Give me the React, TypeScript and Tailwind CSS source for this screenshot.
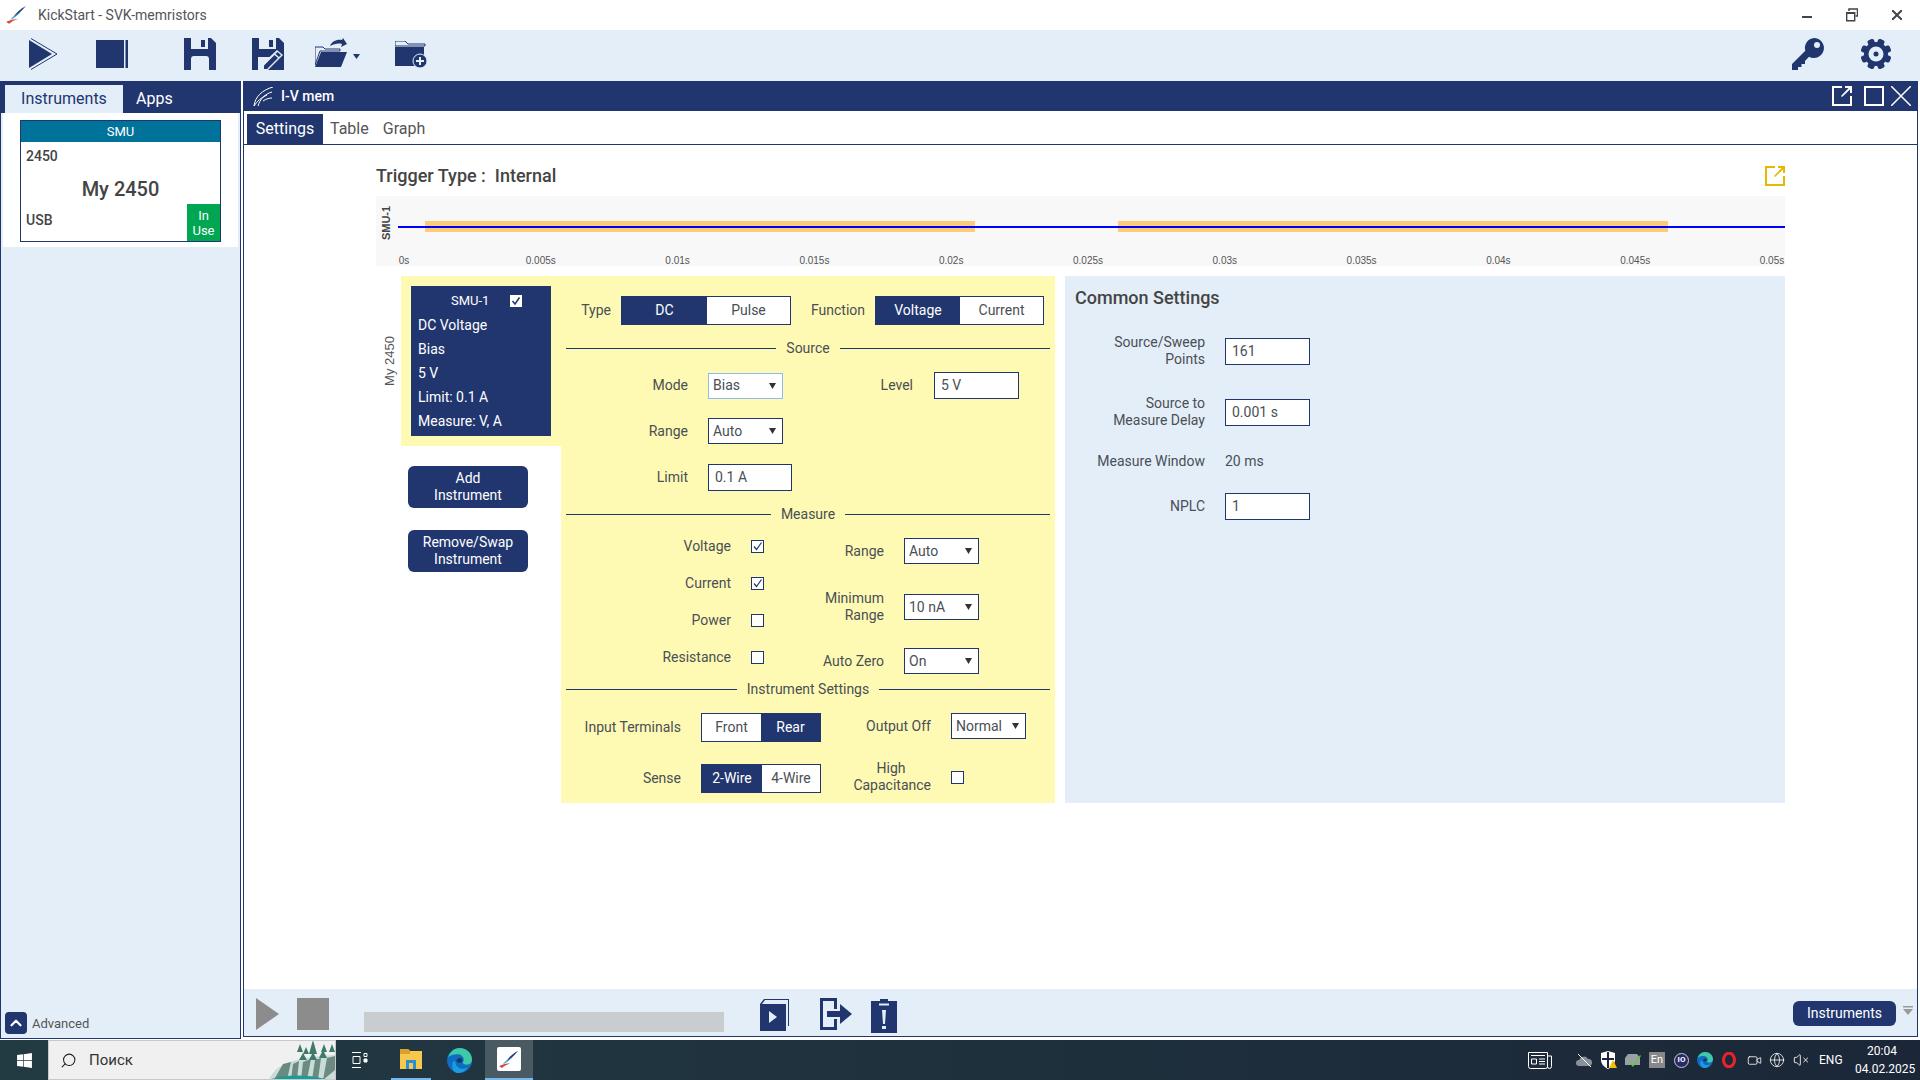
import { Globe, Video, VolumeX, Search, ChevronUp } from "lucide-react"
import { FaWindows } from "react-icons/fa"

const navy = "#21366f"

const ticks = ["0s", "0.005s", "0.01s", "0.015s", "0.02s", "0.025s", "0.03s", "0.035s", "0.04s", "0.045s", "0.05s"]

function Caret() {
    return (
        <svg width="7" height="6" viewBox="0 0 7 6" className="shrink-0">
            <path d="M0 0h7L3.5 6z" fill="#333" />
        </svg>
    )
}

function Select({ value, focus, width = "w-[75px]" }: { value: string; focus?: boolean; width?: string }) {
    return (
        <div className={`${width} h-[26px] shrink-0 flex items-center justify-between pl-[4px] pr-[6px] bg-white border text-[14px] text-[#4a4f55] ${focus ? "border-[#8fbcf0]" : "border-[#21366f]"}`}>
            <span>{value}</span>
            <Caret />
        </div>
    )
}

function Input({ value, width = "w-[85px]" }: { value: string; width?: string }) {
    return (
        <div className={`${width} h-[27px] shrink-0 flex items-center pl-[6px] bg-white border border-[#21366f] text-[14px] text-[#4a4f55]`}>
            {value}
        </div>
    )
}

function Toggle({ left, right, active, leftW, rightW }: { left: string; right: string; active: "left" | "right"; leftW: string; rightW: string }) {
    const on = "bg-[#21366f] text-white"
    const off = "bg-white text-[#4a4f55]"
    return (
        <div className="flex h-[29px] shrink-0 border border-[#21366f] text-[14px]">
            <div className={`${leftW} flex items-center justify-center ${active === "left" ? on : off}`}>{left}</div>
            <div className={`${rightW} flex items-center justify-center ${active === "right" ? on : off}`}>{right}</div>
        </div>
    )
}

function Divider({ label, className }: { label: string; className: string }) {
    return (
        <div className={`flex items-center h-[20px] ml-[5px] mr-[5px] gap-[10px] text-[14px] text-[#4a4f55] ${className}`}>
            <div className="flex-1 h-px bg-[#21366f]" />
            <span>{label}</span>
            <div className="flex-1 h-px bg-[#21366f]" />
        </div>
    )
}

function Check({ checked, className = "" }: { checked?: boolean; className?: string }) {
    return (
        <div className={`w-[13px] h-[13px] shrink-0 bg-white border border-[#21366f] flex items-center justify-center ${className}`}>
            {checked && (
                <svg width="11" height="11" viewBox="0 0 11 11">
                    <path d="M2 5.5l2.5 3L9.5 1.5" fill="none" stroke="#21366f" strokeWidth="1.2" />
                </svg>
            )}
        </div>
    )
}

function MeasureCheck({ label, checked }: { label: string; checked?: boolean }) {
    return (
        <div className="h-[37px] flex items-center">
            <div className="w-[170px] text-right">{label}</div>
            <Check checked={checked} className="ml-[20px]" />
        </div>
    )
}

function Popout({ color }: { color: string }) {
    return (
        <svg width="20" height="20" viewBox="0 0 20 20" className="shrink-0">
            <path d="M10 1H1v18h18v-9" fill="none" stroke={color} strokeWidth="2" />
            <path d="M13 0h7v7h-2V3.400L10 11 9 10l7.600-8H13z" fill={color} />
        </svg>
    )
}

function Gear() {
    return (
        <svg width="32" height="32" viewBox="0 0 32 32">
            {[0, 45, 90, 135, 180, 225, 270, 315].map((a) => (
                <rect key={a} x="12.500" y="0.500" width="7" height="8" rx="2" fill={navy} transform={`rotate(${a + 22.5} 16 16)`} />
            ))}
            <circle cx="16" cy="16" r="12" fill={navy} />
            <circle cx="16" cy="16" r="7.500" fill="#e4eef8" />
            <circle cx="16" cy="16" r="2.500" fill={navy} />
        </svg>
    )
}

function Floppy({ pencil }: { pencil?: boolean }) {
    return (
        <svg width="32" height="32" viewBox="0 0 32 32">
            <path d="M0 0h27l5 5v27H0z" fill={navy} />
            <path d="M7 0h17v11H7z" fill="#e4eef8" />
            <path d="M17 2h4v7h-4z" fill={navy} />
            {!pencil && <path d="M7 21q0-3 3-3h12q3 0 3 3v11H7z" fill="#e4eef8" />}
            {pencil && (
                <>
                    <path d="M6 19h14l-8 9v4H6z" fill="#e4eef8" />
                    <path d="M25 12l6 5-15 15h-6v-6z" fill="#e4eef8" />
                    <path d="M25.500 14l3.500 3-2 2-3.500-3zM22.500 17l3.500 3-11 11H12v-3.500z" fill={navy} />
                </>
            )}
        </svg>
    )
}

function TitleLogo({ size = 21 }: { size?: number }) {
    return (
        <svg width={size} height={size * 0.85} viewBox="0 0 21 18">
            <path d="M20 0C14 3 9 8 6 13c4-3 9-7 14-13z" fill="#21366f" />
            <path d="M15 6C10 9 6 11 4 14c3-1 7-4 11-8z" fill="#3fa6d8" />
            <path d="M0 16c4-2 8-3 12-3-4 1-7 3-9 5z" fill="#d6453f" />
        </svg>
    )
}

function Edge({ size }: { size: number }) {
    return (
        <svg width={size} height={size} viewBox="0 0 24 24">
            <circle cx="12" cy="12" r="12" fill="#0f6cc0" />
            <path d="M1 9C3 3 8 0 12 0c7 0 12 5 12 11 0 3-2 5-5 5-2 0-4-1-4-2 1-1 1-2 1-3 0-3-3-5-6-5C6 6 3 7 1 9z" fill="#3ec9a7" />
            <path d="M8 13c0 4 3 7 7 7 2 0 4-1 5-2-2 4-5 6-9 6-4 0-6-3-6-7 0-3 1-5 3-4z" fill="#1b9de2" />
            <path d="M9 12c1-2 3-3 5-2 1 1 1 3 0 4-1 0-4 1-5-2z" fill="#16395f" />
        </svg>
    )
}

function TitleBar() {
    return (
        <div className="h-[30px] shrink-0 flex items-center bg-white text-[14px] text-[#555]">
            <div className="ml-[6px] w-[32px]"><TitleLogo /></div>
            <span>KickStart - SVK-memristors</span>
            <div className="ml-auto flex items-center">
                <div className="w-[10px] h-[2px] bg-[#444] mt-[4px]" />
                <svg width="12" height="14" viewBox="0 0 12 14" className="ml-[34px]" fill="none" stroke="#444">
                    <path d="M3 3V1h8.500v7H9.500" strokeWidth="1.500" />
                    <path d="M.700 4.700h8v8h-8z" strokeWidth="1.400" />
                    <path d="M0 4h9v2H0z" fill="#444" stroke="none" />
                </svg>
                <svg width="10" height="10" viewBox="0 0 10 10" className="ml-[34px] mr-[18px]" stroke="#444" strokeWidth="2">
                    <path d="M0 0l10 10M10 0L0 10" />
                </svg>
            </div>
        </div>
    )
}

function Toolbar() {
    return (
        <div className="h-[51px] shrink-0 flex items-start pt-[8px] bg-[#e4eef8]">
            <svg width="29" height="32" viewBox="0 0 29 32" className="ml-[29px]">
                <path d="M0 2l23 14L0 30z" fill={navy} />
                <path d="M2 .5L28 16 2 31.500" fill="none" stroke={navy} strokeWidth="1" />
            </svg>
            <svg width="32" height="32" viewBox="0 0 32 32" className="ml-[38px]">
                <path d="M0 2h28v28H0zM29.500 2H32v28h-2.500z" fill={navy} />
            </svg>
            <div className="ml-[56px]"><Floppy /></div>
            <div className="ml-[36px]"><Floppy pencil /></div>
            <svg width="32" height="30" viewBox="0 0 32 30" className="ml-[31px]">
                <path d="M0 9V27L5 13h20v-2H10L8 9z" fill="none" stroke={navy} strokeWidth="1" />
                <path d="M6 14h26l-6 15H0z" fill={navy} />
                <path d="M15 8c2-5 7-7 12-6l1-2 4 6-6 3 1-3c-4-1-8 0-12 2z" fill={navy} />
            </svg>
            <svg width="7" height="5" viewBox="0 0 7 5" className="ml-[6px] mt-[16px]">
                <path d="M0 0h7L3.500 5z" fill={navy} />
            </svg>
            <svg width="32" height="27" viewBox="0 0 32 27" className="ml-[35px] mt-[3px]">
                <path d="M0 3V0h10l3 3h17v2H0z" fill="none" stroke={navy} strokeWidth="1" />
                <path d="M0 6h29v19H0z" fill={navy} />
                <circle cx="25" cy="20" r="7" fill={navy} stroke="#e4eef8" strokeWidth="1" />
                <path d="M24 16h2v3h3v2h-3v3h-2v-3h-3v-2h3z" fill="#e4eef8" />
            </svg>
            <svg width="32" height="32" viewBox="0 0 32 32" className="ml-auto">
                <path d="M22 0a10 10 0 1 1-5 18.700L13 23v3H9.500v3H6v3H0v-6l13.300-13.300A10 10 0 0 1 22 0z" fill={navy} />
                <circle cx="25" cy="7" r="3" fill="#e4eef8" />
            </svg>
            <div className="ml-[36px] mr-[28px]"><Gear /></div>
        </div>
    )
}

function LeftPanel() {
    return (
        <div className="w-[241px] h-[958px] shrink-0 flex flex-col bg-[#e4eef8] border-x border-b border-[#21366f]">
            <div className="h-[32px] shrink-0 flex items-end bg-[#21366f] pl-[4px] text-[16px]">
                <div className="w-[118px] h-[28px] flex items-center justify-center bg-[#e4eef8] text-[#21366f]">Instruments</div>
                <div className="ml-[13px] h-[28px] flex items-center text-white">Apps</div>
            </div>
            <div className="mx-[2px] h-[134px] shrink-0 bg-white pt-[7px] pl-[17px]">
                <div className="w-[201px] h-[122px] flex flex-col border border-[#21366f]">
                    <div className="h-[21px] shrink-0 flex items-center justify-center bg-[#00739b] text-white text-[13px]">SMU</div>
                    <div className="flex-1 relative text-[#444] font-medium">
                        <div className="pl-[5px] pt-[4px] text-[14px]">2450</div>
                        <div className="text-center text-[20px] mt-[7px]">My 2450</div>
                        <div className="pl-[5px] mt-[6px] text-[14px]">USB</div>
                        <div className="absolute right-0 bottom-0 w-[33px] h-[37px] flex items-center justify-center text-center bg-[#00a651] text-white text-[13px] font-normal leading-[15px]">In Use</div>
                    </div>
                </div>
            </div>
            <div className="flex-1" />
            <div className="h-[26px] flex items-start pl-[4px] pt-[0px] mb-[3px]">
                <div className="w-[22px] h-[22px] mt-[3px] rounded-[4px] bg-[#21366f] flex items-center justify-center">
                    <ChevronUp size={18} color="white" strokeWidth={3} />
                </div>
                <span className="ml-[5px] mt-[7px] text-[13px] leading-[15px] text-[#555]">Advanced</span>
            </div>
        </div>
    )
}

function Chart() {
    return (
        <div className="h-[70px] bg-[#f8f8f8]">
            <svg width="1409" height="70" viewBox="0 0 1409 70">
                <rect x="49" y="25" width="550" height="11" fill="#fdcb7c" />
                <rect x="742" y="25" width="550" height="11" fill="#fdcb7c" />
                <rect x="22" y="30" width="1387" height="2" fill="#0000ff" />
                <text x="0" y="0" transform="translate(14 27) rotate(-90)" textAnchor="middle" fontFamily="Liberation Sans, sans-serif" fontSize="11" fontWeight="700" fill="#444">SMU-1</text>
                {ticks.map((t, i) => (
                    <text key={t} x={28 + i * 136.8} y="68" textAnchor="middle" fontFamily="Liberation Sans, sans-serif" fontSize="10" fill="#555">{t}</text>
                ))}
            </svg>
        </div>
    )
}

function SmuColumn() {
    return (
        <div className="w-[160px] shrink-0">
            <div className="h-[170px] bg-[#fefab4] pl-[10px] pt-[10px]">
                <div className="w-[140px] h-[150px] bg-[#21366f] text-white text-[14px] pt-[3px] pl-[7px]">
                    <div className="h-[24px] flex items-center">
                        <span className="ml-[33px] text-[13px]">SMU-1</span>
                        <div className="ml-[21px] w-[12px] h-[12px] bg-white flex items-center justify-center">
                            <svg width="10" height="10" viewBox="0 0 10 10">
                                <path d="M1.500 5l2.500 3 4.500-6.500" fill="none" stroke="#21366f" strokeWidth="1.500" />
                            </svg>
                        </div>
                    </div>
                    <div className="h-[24px] flex items-center">DC Voltage</div>
                    <div className="h-[24px] flex items-center">Bias</div>
                    <div className="h-[24px] flex items-center">5 V</div>
                    <div className="h-[24px] flex items-center">Limit: 0.1 A</div>
                    <div className="h-[24px] flex items-center">Measure: V, A</div>
                </div>
            </div>
            <div className="ml-[7px] mt-[20px] w-[120px] h-[42px] flex items-center justify-center text-center rounded-[6px] bg-[#21366f] text-white text-[14px] leading-[17px]">Add<br />Instrument</div>
            <div className="ml-[7px] mt-[22px] w-[120px] h-[42px] flex items-center justify-center text-center rounded-[6px] bg-[#21366f] text-white text-[14px] leading-[17px]">Remove/Swap<br />Instrument</div>
        </div>
    )
}

function SourceForm() {
    return (
        <div className="w-[494px] h-[527px] shrink-0 bg-[#fefab4] pt-[20px] text-[14px] text-[#4a4f55]">
            <div className="flex items-center">
                <div className="w-[50px] text-right">Type</div>
                <div className="ml-[10px]"><Toggle left="DC" right="Pulse" active="left" leftW="w-[85px]" rightW="w-[83px]" /></div>
                <div className="ml-[20px] w-[54px]">Function</div>
                <div className="ml-[10px]"><Toggle left="Voltage" right="Current" active="left" leftW="w-[84px]" rightW="w-[83px]" /></div>
            </div>
            <Divider label="Source" className="mt-[13px]" />
            <div className="mt-[14px] flex items-center">
                <div className="w-[127px] text-right">Mode</div>
                <div className="ml-[20px]"><Select value="Bias" focus /></div>
                <div className="w-[130px] text-right">Level</div>
                <div className="ml-[21px]"><Input value="5 V" /></div>
            </div>
            <div className="mt-[19px] flex items-center">
                <div className="w-[127px] text-right">Range</div>
                <div className="ml-[20px]"><Select value="Auto" /></div>
            </div>
            <div className="mt-[20px] flex items-center">
                <div className="w-[127px] text-right">Limit</div>
                <div className="ml-[20px]"><Input value="0.1 A" width="w-[84px]" /></div>
            </div>
            <Divider label="Measure" className="mt-[13px]" />
            <div className="mt-[4px] flex h-[148px]">
                <div className="w-[203px] shrink-0">
                    <MeasureCheck label="Voltage" checked />
                    <MeasureCheck label="Current" checked />
                    <MeasureCheck label="Power" />
                    <MeasureCheck label="Resistance" />
                </div>
                <div className="pt-[10px]">
                    <div className="flex items-center">
                        <div className="w-[120px] text-right">Range</div>
                        <div className="ml-[20px]"><Select value="Auto" /></div>
                    </div>
                    <div className="mt-[26px] flex items-center">
                        <div className="w-[120px] text-right leading-[17px]">Minimum<br />Range</div>
                        <div className="ml-[20px]"><Select value="10 nA" /></div>
                    </div>
                    <div className="mt-[24px] flex items-center">
                        <div className="w-[120px] text-right">Auto Zero</div>
                        <div className="ml-[20px]"><Select value="On" /></div>
                    </div>
                </div>
            </div>
            <Divider label="Instrument Settings" className="mt-[3px]" />
            <div className="mt-[14px] flex items-start">
                <div className="w-[120px] h-[29px] flex items-center justify-end">Input Terminals</div>
                <div className="ml-[20px]"><Toggle left="Front" right="Rear" active="right" leftW="w-[59px]" rightW="w-[59px]" /></div>
                <div className="w-[110px] h-[26px] flex items-center justify-end">Output Off</div>
                <div className="ml-[20px]"><Select value="Normal" /></div>
            </div>
            <div className="mt-[21px] flex items-center">
                <div className="w-[120px] text-right">Sense</div>
                <div className="ml-[20px]"><Toggle left="2-Wire" right="4-Wire" active="left" leftW="w-[60px]" rightW="w-[58px]" /></div>
                <div className="w-[110px] text-right leading-[17px] -mt-[3px]">
                    <div className="text-center w-[80px] ml-[30px]">High</div>
                    Capacitance
                </div>
                <Check className="ml-[20px] -mt-[3px]" />
            </div>
        </div>
    )
}

function CommonRow({ label, value, input, className }: { label: React.ReactNode; value: string; input?: boolean; className: string }) {
    return (
        <div className={`flex items-center ${className}`}>
            <div className="w-[130px] text-right leading-[17px]">{label}</div>
            <div className="ml-[20px]">{input ? <Input value={value} /> : value}</div>
        </div>
    )
}

function CommonSettings() {
    return (
        <div className="w-[720px] h-[527px] ml-[10px] shrink-0 bg-[#e4eef8] pt-[10px] pl-[10px] text-[14px] text-[#4a4f55]">
            <div className="h-[22px] flex items-center text-[18px] font-medium text-[#444]">Common Settings</div>
            <CommonRow className="mt-[26px]" label={<>Source/Sweep<br />Points</>} value="161" input />
            <CommonRow className="mt-[27px]" label={<>Source to<br />Measure Delay</>} value="0.001 s" input />
            <CommonRow className="mt-[22px]" label="Measure Window" value="20 ms" />
            <CommonRow className="mt-[21px]" label="NPLC" value="1" input />
        </div>
    )
}

function BottomBar() {
    return (
        <div className="h-[47px] shrink-0 flex items-start bg-[#e4eef8] pl-[12px] pr-[4px]">
            <svg width="23" height="32" viewBox="0 0 23 32" className="mt-[9px]">
                <path d="M0 0l23 16L0 32z" fill="#8c8c8c" />
            </svg>
            <div className="ml-[18px] mt-[9px] w-[32px] h-[32px] bg-[#8c8c8c]" />
            <div className="ml-[35px] mt-[23px] w-[360px] h-[20px] bg-[#c9cdd0]" />
            <svg width="30" height="32" viewBox="0 0 30 32" className="ml-[36px] mt-[10px]">
                <path d="M0 5l4-5h25v27h-1V1H5L2 5h24v27H0z" fill={navy} />
                <path d="M9 12l8 6-8 6z" fill="#e4eef8" />
            </svg>
            <svg width="32" height="32" viewBox="0 0 32 32" className="ml-[30px] mt-[9px]">
                <path d="M0 0h17v11h-3V3H3v26h11v-8h3v11H0z" fill={navy} />
                <path d="M7 13h13V6l12 10-12 10v-7H7z" fill={navy} />
            </svg>
            <svg width="26" height="34" viewBox="0 0 26 34" className="ml-[19px] mt-[10px]">
                <path d="M0 2h9V0h8v2h9v32H0z" fill={navy} />
                <path d="M8 4.500h10v2H8zM11 11h4l-1 14h-2zM11 27h4v3h-4z" fill="#e4eef8" />
            </svg>
            <div className="ml-auto mt-[12px] w-[103px] h-[25px] flex items-center justify-center rounded-[6px] bg-[#21366f] text-white text-[14px]">Instruments</div>
            <svg width="10" height="9" viewBox="0 0 10 9" className="ml-[7px] mt-[17px]">
                <path d="M0 0h10v1.500H0zM0 3h10L5 9z" fill="#999" />
            </svg>
        </div>
    )
}

function MainPanel() {
    return (
        <div className="ml-[2px] w-[1675px] h-[956px] shrink-0 flex flex-col border-x border-b border-[#21366f]">
            <div className="h-[30px] shrink-0 flex items-center bg-[#21366f] text-white text-[14px] font-medium">
                <svg width="20" height="19" viewBox="0 0 20 19" className="ml-[9px]" fill="none" stroke="white" strokeWidth="1">
                    <path d="M1 19C2 10 9 3 20 0M5 19C7 12 12 7 19 5M10 14c3-2 6-3 9-3M1 19c3-5 8-9 13-11" />
                </svg>
                <span className="ml-[8px]">I-V mem</span>
                <div className="ml-auto flex items-center">
                    <Popout color="white" />
                    <div className="ml-[12px] w-[20px] h-[20px] border-2 border-white" />
                    <svg width="20" height="20" viewBox="0 0 20 20" className="ml-[7px] mr-[6px]" stroke="white" strokeWidth="1.500">
                        <path d="M0 0l20 20M20 0L0 20" />
                    </svg>
                </div>
            </div>
            <div className="h-[34px] shrink-0 flex items-end border-b border-[#21366f] pl-[3px] text-[16px] text-[#555]">
                <div className="w-[76px] h-[30px] flex items-center justify-center bg-[#21366f] text-white">Settings</div>
                <div className="ml-[7px] h-[30px] flex items-center">Table</div>
                <div className="ml-[14px] h-[30px] flex items-center">Graph</div>
            </div>
            <div className="flex-1 pl-[132px]">
                <div className="w-[1409px]">
                    <div className="h-[51px] pt-[10px] flex items-center justify-between text-[18px] font-medium text-[#444]">
                        <span className="whitespace-pre">Trigger Type :  Internal</span>
                        <Popout color="#e6b800" />
                    </div>
                    <Chart />
                    <div className="mt-[10px] flex">
                        <div className="w-[25px] shrink-0 h-[170px] flex items-center justify-end pr-[2px]">
                            <span className="[writing-mode:vertical-rl] rotate-180 text-[13px] text-[#555] font-[family-name:Liberation_Sans,sans-serif]">My 2450</span>
                        </div>
                        <SmuColumn />
                        <SourceForm />
                        <CommonSettings />
                    </div>
                </div>
            </div>
            <BottomBar />
        </div>
    )
}

function Taskbar() {
    return (
        <div className="h-[40px] shrink-0 flex items-center bg-gradient-to-r from-[#223a42] to-[#1b2738] text-white">
            <FaWindows size={17} color="white" className="ml-[16px]" />
            <div className="ml-[15px] w-[288px] h-[40px] flex items-center bg-[#f0f0f0] border border-[#c8c8c8] overflow-hidden">
                <Search size={17} color="#222" className="ml-[11px] -scale-x-100" strokeWidth={1.500} />
                <span className="ml-[12px] text-[15px] text-[#333]">Поиск</span>
                <svg width="66" height="40" viewBox="0 0 66 40" className="ml-auto">
                    <path d="M0 40C6 26 18 18 66 15v25z" fill="#c8dcd8" />
                    <path d="M6 38l8-14 8-2-4 18zM24 24l6-3-2 19h-6zM34 22l8-3-4 21h-6zM46 20l6-2-3 22h-6zM58 18l8-2v14l-12 10z" fill="#6c8a80" />
                    <path d="M0 40c14-6 40-6 60 0z" fill="#1a9c98" />
                    <path d="M28 12l3-8 3 8zM40 14l4-14 4 14zM52 12l3-8 3 8zM60 12l3-8 3 8zM34 14l3-7 3 7zM30 20l4-7 4 7zM40 20l4-8 4 8zM50 18l4-8 4 8z" fill="#3d7a6c" />
                </svg>
            </div>
            <svg width="16" height="16" viewBox="0 0 16 16" className="ml-[16px]" fill="none" stroke="white" strokeWidth="1">
                <path d="M0 .5h9M0 15.500h9M1 4.500h7v7H1zM12 1.500h3v3h-3z" />
                <path d="M12 7h3v3h-3z" fill="white" />
            </svg>
            <div className="ml-[23px] w-[40px] h-[40px] flex items-center justify-center border-b-2 border-[#76b9ed]">
                <svg width="22" height="20" viewBox="0 0 22 20">
                    <path d="M0 0h8l2 2h12v18H0z" fill="#f6c84c" />
                    <path d="M0 0h8l2 2v3H0z" fill="#d9a02c" />
                    <path d="M6 11h10v9H6z" fill="#2a8fd8" />
                    <path d="M9 14h4v6H9z" fill="#f6c84c" />
                </svg>
            </div>
            <div className="ml-[16px]"><Edge size={25} /></div>
            <div className="ml-[13px] w-[48px] h-[40px] flex items-center justify-center bg-[#4a5a62] border-b-2 border-[#76b9ed]">
                <div className="w-[24px] h-[24px] rounded-[2px] bg-white flex items-center justify-center">
                    <TitleLogo size={20} />
                </div>
            </div>
            <svg width="24" height="17" viewBox="0 0 24 17" className="ml-auto" fill="none" stroke="white" strokeWidth="1">
                <path d="M.5.500h19v14a2 2 0 0 1-2 2h-15a2 2 0 0 1-2-2zM19.500 4h4v10.500a2 2 0 0 1-4 0M3 3.500h14" />
                <path d="M3.500 7h5v5h-5zM11 7h6M11 9.500h6M11 12h6" />
            </svg>
            <svg width="16" height="13" viewBox="0 0 16 13" className="ml-[24px]">
                <path d="M3 12a3 3 0 0 1 0-6 5 5 0 0 1 9-1 3.500 3.500 0 0 1 1 7z" fill="#8a9299" />
                <path d="M2 0l13 13" stroke="white" strokeWidth="1" />
            </svg>
            <svg width="16" height="18" viewBox="0 0 16 18" className="ml-[9px]">
                <path d="M7 0l7 2v7c0 4-3 7-7 9-4-2-7-5-7-9V2z" fill="white" />
                <path d="M6 1h2v16H6zM1 7h12v2H1z" fill="#1b2738" />
                <path d="M12 9l4 8H8z" fill="#f6c000" />
            </svg>
            <svg width="16" height="14" viewBox="0 0 16 14" className="ml-[8px]">
                <path d="M0 5l3-4h9l3 4v7H0z" fill="#9aa0a4" />
                <path d="M5 8l3 4 7-10 1 1-8 11-4-5z" fill="#5ecb3c" />
            </svg>
            <div className="ml-[8px] w-[16px] h-[16px] flex items-center justify-center bg-[#888] text-[11px]">En</div>
            <div className="ml-[9px] w-[15px] h-[15px] rounded-full flex items-center justify-center bg-[#2a2a6a] border border-[#ccc] text-[8px] font-bold">IO</div>
            <div className="ml-[8px]"><Edge size={16} /></div>
            <svg width="14" height="16" viewBox="0 0 14 16" className="ml-[9px]">
                <ellipse cx="7" cy="8" rx="5.500" ry="6.800" fill="none" stroke="#e8232a" strokeWidth="3" />
            </svg>
            <Video size={15} color="white" strokeWidth={1.300} className="ml-[11px]" />
            <Globe size={16} color="white" strokeWidth={1.200} className="ml-[7px]" />
            <VolumeX size={16} color="white" strokeWidth={1.300} className="ml-[8px]" />
            <span className="ml-[10px] w-[23px] text-[12px]">ENG</span>
            <div className="ml-[13px] mr-[11px] w-[54px] text-center text-[12px] leading-[18px]">
                <div>20:04</div>
                <div>04.02.2025</div>
            </div>
        </div>
    )
}

export default function App() {
    return (
        <div className="w-[1920px] h-[1080px] flex flex-col overflow-hidden bg-white font-[family-name:Roboto,sans-serif]">
            <TitleBar />
            <Toolbar />
            <div className="flex-1 flex">
                <LeftPanel />
                <MainPanel />
            </div>
            <Taskbar />
        </div>
    )
}
